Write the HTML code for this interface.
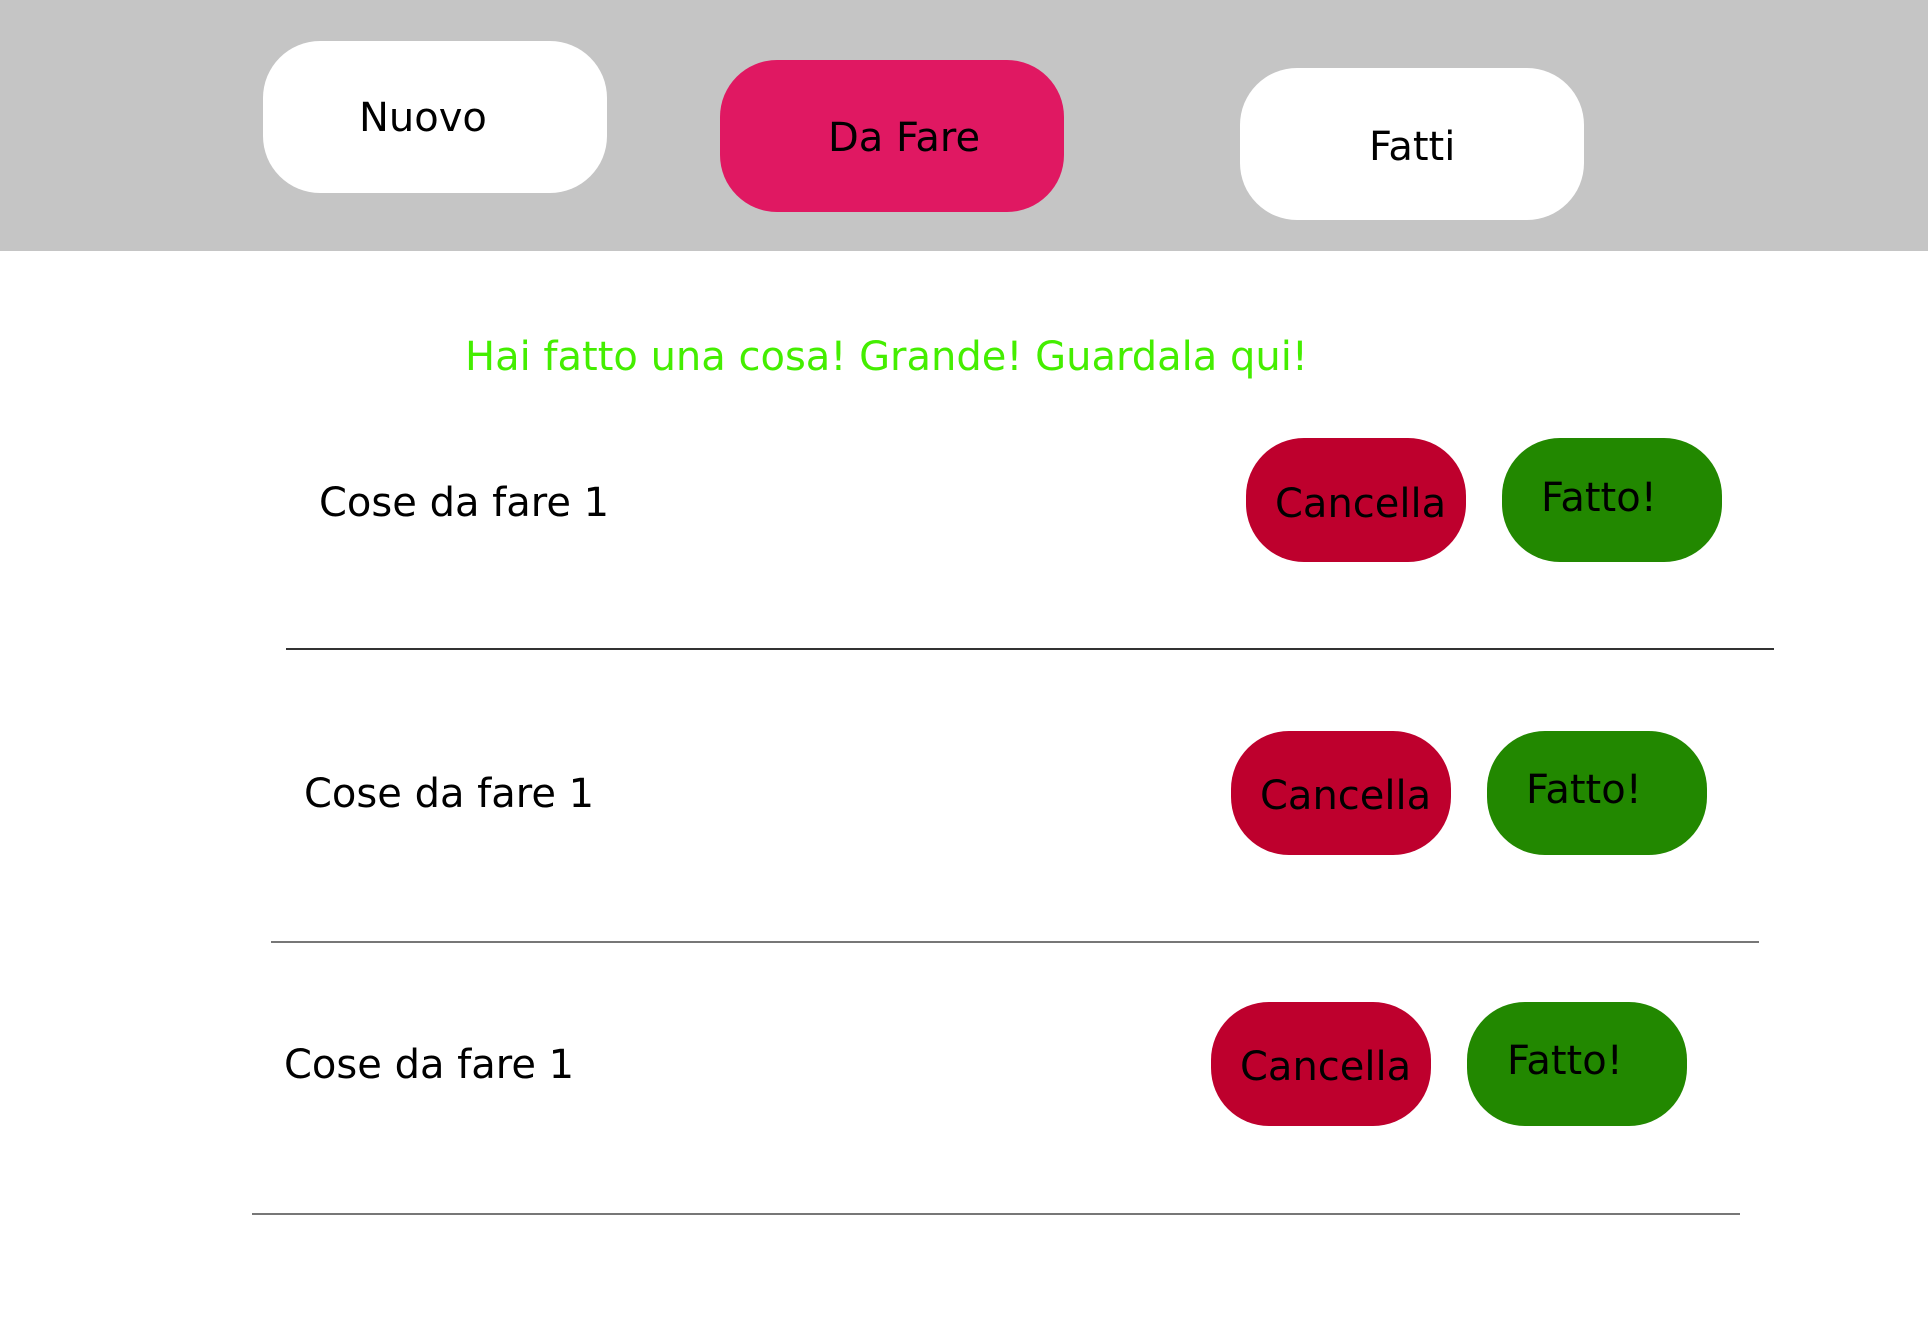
<!DOCTYPE html>
<html><head><meta charset="utf-8"><style>
body{margin:0;width:1930px;height:1344px;background:#fff;position:relative;overflow:hidden;font-family:"DejaVu Sans","Liberation Sans",sans-serif;}
.a{position:absolute}
.b{position:absolute;border-radius:57px}
.t{position:absolute;font-size:40px;line-height:1;white-space:nowrap;color:#000}
.l{position:absolute;height:2px;background:#555}
.r{background:#be002d;width:220px;height:124px;border-radius:58px}
.g{background:#228800;width:220px;height:124px;border-radius:58px}
</style></head><body>
<div class="a" style="left:0;top:0;width:1928px;height:251px;background:#c5c5c5"></div>
<div class="b" style="left:263px;top:41px;width:344px;height:152px;background:#fff"></div>
<div class="b" style="left:720px;top:60px;width:344px;height:152px;background:#e01862"></div>
<div class="b" style="left:1240px;top:68px;width:344px;height:152px;background:#fff"></div>
<div class="t" style="left:359px;top:98px">Nuovo</div>
<div class="t" style="left:828px;top:118px">Da Fare</div>
<div class="t" style="left:1369px;top:127px">Fatti</div>
<div class="t" style="left:465px;top:337px;color:#44ee00">Hai fatto una cosa! Grande! Guardala qui!</div>

<div class="t" style="left:319px;top:483px">Cose da fare 1</div>
<div class="b r" style="left:1246px;top:438px"></div>
<div class="b g" style="left:1502px;top:438px"></div>
<div class="t" style="left:1275px;top:484px">Cancella</div>
<div class="t" style="left:1541px;top:478px">Fatto!</div>
<div class="l" style="left:286px;top:648px;width:1488px;background:#333"></div>

<div class="t" style="left:304px;top:774px">Cose da fare 1</div>
<div class="b r" style="left:1231px;top:731px"></div>
<div class="b g" style="left:1487px;top:731px"></div>
<div class="t" style="left:1260px;top:776px">Cancella</div>
<div class="t" style="left:1526px;top:770px">Fatto!</div>
<div class="l" style="left:271px;top:941px;width:1488px;height:2px;background:#777"></div>

<div class="t" style="left:284px;top:1045px">Cose da fare 1</div>
<div class="b r" style="left:1211px;top:1002px"></div>
<div class="b g" style="left:1467px;top:1002px"></div>
<div class="t" style="left:1240px;top:1047px">Cancella</div>
<div class="t" style="left:1507px;top:1041px">Fatto!</div>
<div class="l" style="left:252px;top:1213px;width:1488px;height:2px;background:#777"></div>
</body></html>
